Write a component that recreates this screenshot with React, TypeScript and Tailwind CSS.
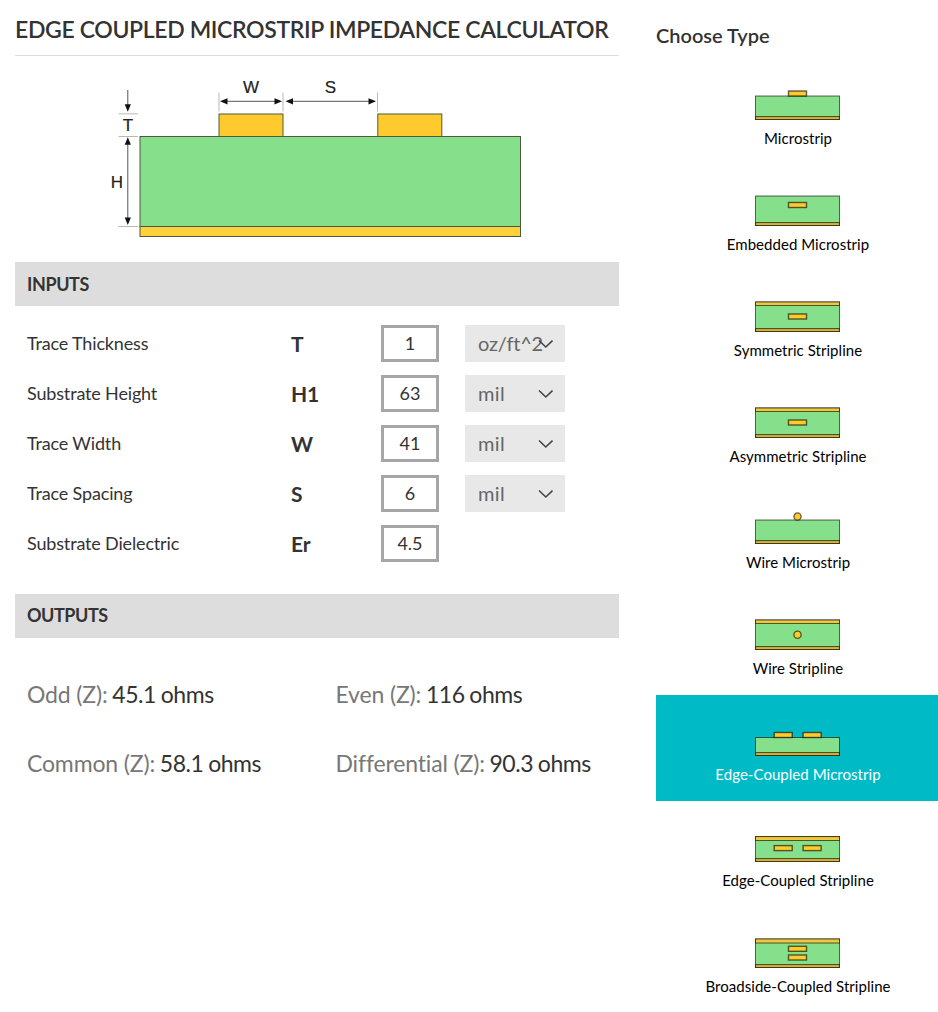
import React from "react";

type Kind = {
  label: string;
  top: number;
  roof?: number;
  traces?: [number, number][];
  wire?: number;
  selected?: boolean;
};

const kinds: Kind[] = [
  { label: "Microstrip", top: 10, traces: [[33.5, 5]] },
  { label: "Embedded Microstrip", top: 4, traces: [[33.5, 10.5]] },
  { label: "Symmetric Stripline", top: 4, roof: 7.5, traces: [[33.5, 16]] },
  { label: "Asymmetric Stripline", top: 4, roof: 7.5, traces: [[33.5, 16]] },
  { label: "Wire Microstrip", top: 10, wire: 6.5 },
  { label: "Wire Stripline", top: 4, roof: 7.5, wire: 18.8 },
  { label: "Edge-Coupled Microstrip", top: 15.5, traces: [[19.2, 10.5], [48.1, 10.5]], selected: true },
  { label: "Edge-Coupled Stripline", top: 8.6, roof: 12.5, traces: [[19.2, 17.6], [48.1, 17.6]] },
  { label: "Broadside-Coupled Stripline", top: 5, roof: 9, traces: [[33.5, 12.3], [33.5, 21]] },
];

function Thumb({ kind }: { kind: Kind }) {
  return (
    <svg width="85" height="34" viewBox="0 0 85 34" className="block" stroke="#000" strokeOpacity="0.6">
      <rect x="0.5" y={kind.top} width="84" height={33.5 - kind.top} fill="#86df8b" />
      {kind.roof !== undefined && (
        <rect x="0.5" y={kind.top} width="84" height={kind.roof - kind.top} fill="#f0c83c" />
      )}
      <rect x="0.5" y="30.6" width="84" height="2.9" fill="#e8bd38" strokeWidth="1.2" />
      {kind.traces?.map(([x, y]) => (
        <rect key={`${x}-${y}`} x={x} y={y} width="18" height="5" fill="#ffca2d" strokeWidth="1.4" />
      ))}
      {kind.wire !== undefined && <circle cx="42.5" cy={kind.wire} r="3.6" fill="#ffca2d" strokeWidth="1.3" />}
    </svg>
  );
}

function Diagram() {
  return (
    <svg
      width="420"
      height="170"
      viewBox="105 75 420 170"
      className="ml-[90px] block font-['Liberation_Sans',sans-serif]"
    >
      <g stroke="#4a5a3c" strokeWidth="1">
        <rect x="140" y="136.5" width="380.5" height="90" fill="#86df8b" />
        <rect x="140" y="226.5" width="380.5" height="10" fill="#ffd23c" />
        <rect x="219" y="114" width="64" height="22.5" fill="#ffca2d" />
        <rect x="377.8" y="114" width="64" height="22.5" fill="#ffca2d" />
      </g>
      <g stroke="#b9b9b9" strokeWidth="1">
        <path d="M219 92.5V111.5M283 92.5V111.5M377.5 92.5V111.5M118.5 113.8H138M118.5 136.5H138M118.5 226.5H138" />
      </g>
      <g stroke="#555" strokeWidth="1">
        <path d="M222 101.3H280M288 101.3H374M127.8 90V107M127.8 140V221" />
      </g>
      <g fill="#111">
        <path d="M220 101.3l7.5-3.1v6.2zM282 101.3l-7.5-3.1v6.2zM285.5 101.3l7.5-3.1v6.2zM376 101.3l-7.5-3.1v6.2z" />
        <path d="M127.8 111.7l-3.1-7.5h6.2zM127.8 137.3l-3.1 7.5h6.2zM127.8 225l-3.1-7.5h6.2z" />
      </g>
      <g fill="#222" stroke="#222" strokeWidth="0.2" fontSize="17" textAnchor="middle">
        <text x="251" y="93">W</text>
        <text x="330.5" y="93">S</text>
        <text x="128" y="130.7">T</text>
        <text x="117" y="188">H</text>
      </g>
    </svg>
  );
}

const rows = [
  { name: "Trace Thickness", symbol: "T", value: "1", unit: "oz/ft^2" },
  { name: "Substrate Height", symbol: "H1", value: "63", unit: "mil" },
  { name: "Trace Width", symbol: "W", value: "41", unit: "mil" },
  { name: "Trace Spacing", symbol: "S", value: "6", unit: "mil" },
  { name: "Substrate Dielectric", symbol: "Er", value: "4.5", unit: "" },
];

const outputs = [
  ["Odd (Z):", "45.1 ohms"],
  ["Even (Z):", "116 ohms"],
  ["Common (Z):", "58.1 ohms"],
  ["Differential (Z):", "90.3 ohms"],
];

export default function App() {
  return (
    <div className="flex h-[1012px] w-[938px] overflow-hidden bg-white font-['Lato',sans-serif] text-[#333]">
      <main className="ml-[15px] w-[604px] shrink-0">
        <h1 className="h-14 whitespace-nowrap border-b border-[#ddd] pt-3 text-[23px] font-semibold leading-[35px] tracking-[-0.36px]">
          EDGE COUPLED MICROSTRIP IMPEDANCE CALCULATOR
        </h1>
        <div className="h-[206px] pt-[19px]">
          <Diagram />
        </div>
        <h2 className="h-11 bg-[#ddd] px-3 text-[18px] font-bold leading-11 tracking-[-0.4px]">INPUTS</h2>
        <div className="h-72 pt-[19px]">
          {rows.map((row) => (
            <div key={row.name} className="flex h-[50px] items-start pl-3">
              <span className="w-[264px] text-[18px] leading-[37px] tracking-[-0.16px]">{row.name}</span>
              <span className="w-[90px] text-[21px] font-bold leading-[37px] tracking-[-0.2px]">{row.symbol}</span>
              <div className="h-[37px] w-[58px] border-3 border-[#a6a6a6] text-center text-[18px] leading-[31px]">
                {row.value}
              </div>
              {row.unit && (
                <div className="ml-[26px] flex h-[37px] w-[100px] items-center bg-[#e8e8e8] pl-[13px] text-[20px] leading-[37px] text-[#666]">
                  <span
                    className={
                      row.unit === "mil"
                        ? "w-[60px] whitespace-nowrap tracking-[0.4px]"
                        : "w-[60px] whitespace-nowrap tracking-[-0.2px]"
                    }
                  >
                    {row.unit}
                  </span>
                  <svg width="15" height="10" viewBox="0 0 15 10" fill="none" stroke="#444" strokeWidth="1.6">
                    <path d="M1 1.5L7.8 8L14.5 1.5" />
                  </svg>
                </div>
              )}
            </div>
          ))}
        </div>
        <h2 className="h-11 bg-[#ddd] px-3 text-[18px] font-bold leading-[42px] tracking-[-0.45px]">OUTPUTS</h2>
        <div className="grid grid-cols-[308.5px_1fr] pl-3 pt-[22px] text-[23px]">
          {outputs.map(([label, value]) => (
            <p key={label} className="h-[69px] whitespace-nowrap leading-[69px]">
              <span className="tracking-[-0.15px] text-[#777]">{label}</span>
              <span className="tracking-[-0.45px] [word-spacing:-0.7px]"> {value}</span>
            </p>
          ))}
        </div>
      </main>
      <aside className="ml-[37px] w-[282px] shrink-0">
        <h2 className="h-[59px] pt-[18px] text-[20px] font-semibold leading-[34px]">Choose Type</h2>
        {kinds.map((kind) => (
          <div
            key={kind.label}
            className={
              kind.selected
                ? "flex h-[106px] flex-col items-center bg-[#00bbc6] pt-[27px] text-white"
                : "flex h-[106px] flex-col items-center pt-[27px] text-black"
            }
          >
            <Thumb kind={kind} />
            <span className="mt-1.5 pl-0.5 text-[15px] leading-6 tracking-[0.04px]">{kind.label}</span>
          </div>
        ))}
      </aside>
    </div>
  );
}
